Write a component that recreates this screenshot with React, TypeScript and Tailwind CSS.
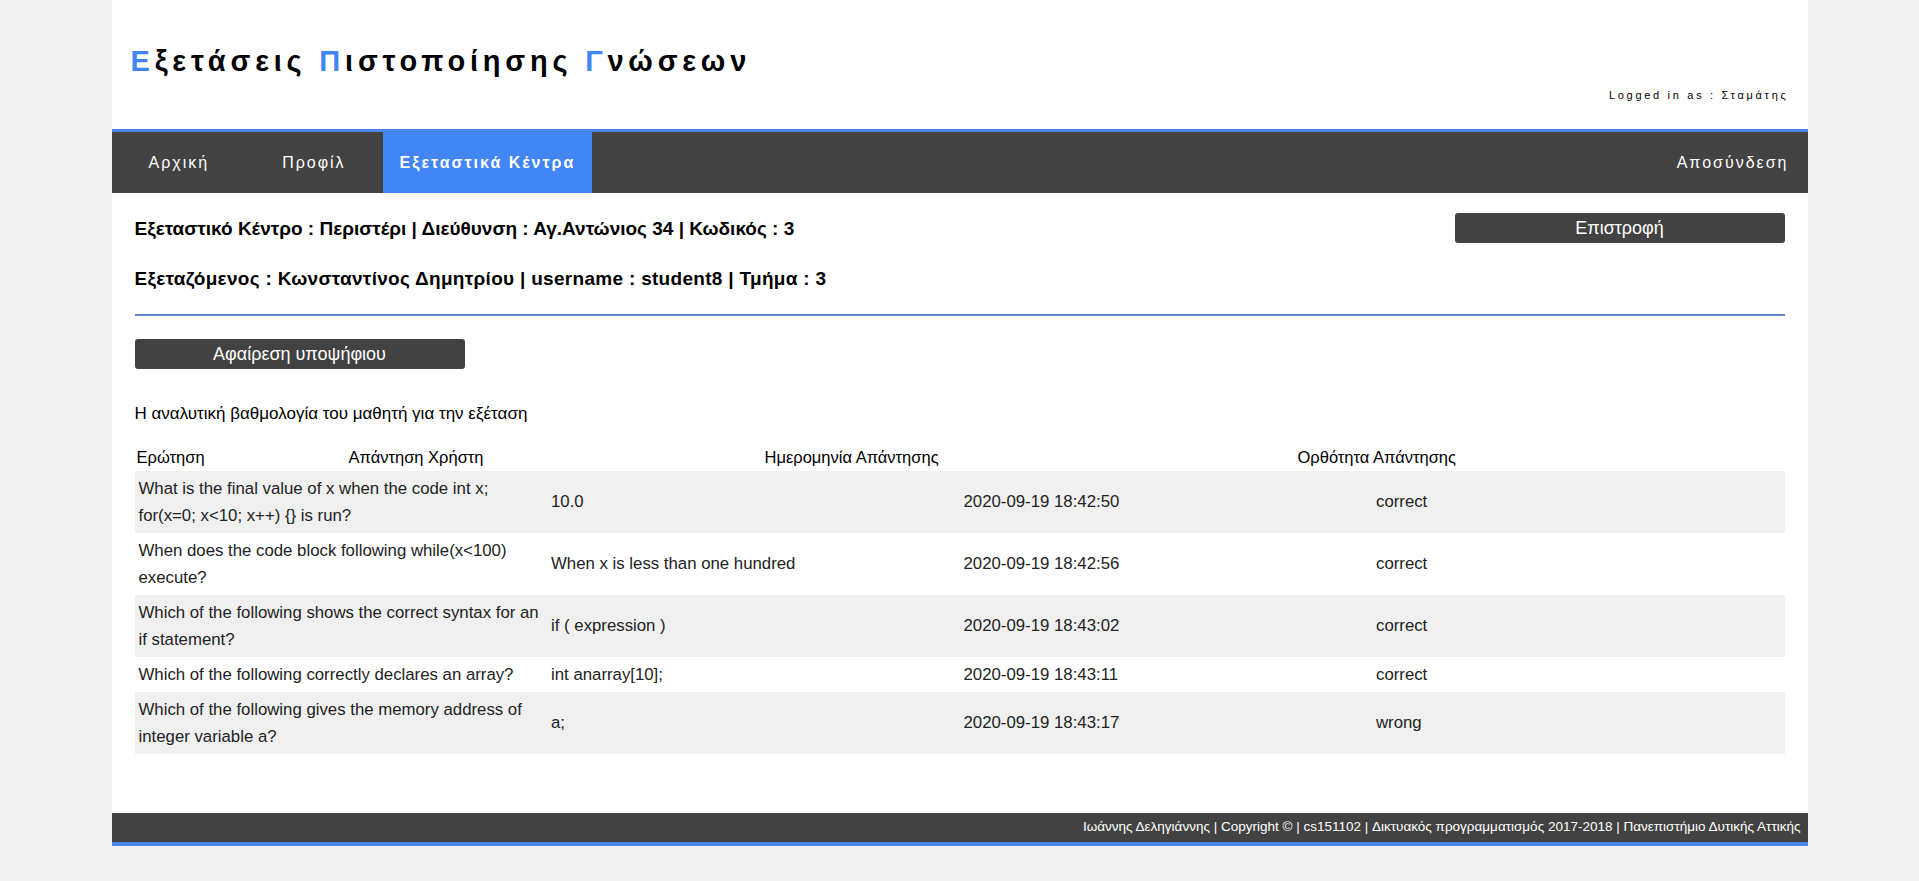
import React from "react";

const rows = [
	{
		q: "What is the final value of x when the code int x; for(x=0; x<10; x++) {} is run?",
		a: "10.0",
		d: "2020-09-19 18:42:50",
		r: "correct",
	},
	{
		q: "When does the code block following while(x<100) execute?",
		a: "When x is less than one hundred",
		d: "2020-09-19 18:42:56",
		r: "correct",
	},
	{
		q: "Which of the following shows the correct syntax for an if statement?",
		a: "if ( expression )",
		d: "2020-09-19 18:43:02",
		r: "correct",
	},
	{
		q: "Which of the following correctly declares an array?",
		a: "int anarray[10];",
		d: "2020-09-19 18:43:11",
		r: "correct",
	},
	{
		q: "Which of the following gives the memory address of integer variable a?",
		a: "a;",
		d: "2020-09-19 18:43:17",
		r: "wrong",
	},
];

const App = () => {
	return (
		<div className="min-h-screen bg-[#f0f0f0] font-['Liberation_Sans',Arial,sans-serif] text-[#111]">
			<div className="mx-auto w-[1696px] bg-white">
				{/* header */}
				<header className="h-[129px] flex items-start justify-between pl-[19px] pr-[19px]">
					<h1 className="pt-[40px] text-[29px] font-bold tracking-[4.8px] text-black">
						<span className="text-[#4285f4]">Ε</span>ξετάσεις{" "}
						<span className="text-[#4285f4]">Π</span>ιστοποίησης{" "}
						<span className="text-[#4285f4]">Γ</span>νώσεων
					</h1>
					<p className="pt-[87px] text-[11px] tracking-[2.7px] text-black">
						Logged in as : Σταμάτης
					</p>
				</header>

				{/* nav */}
				<nav className="flex h-[64px] items-stretch border-t-[3px] border-[#4a86e8] bg-[#424242] text-[16px] tracking-[2px] text-white">
					<a className="ml-[20px] flex items-center px-[17px]">Αρχική</a>
					<a className="ml-[39px] flex items-center px-[17px]">Προφίλ</a>
					<a className="ml-[20px] flex items-center bg-[#4285f4] px-[17px] font-bold">
						Εξεταστικά Κέντρα
					</a>
					<a className="ml-auto flex items-center pr-[19px]">Αποσύνδεση</a>
				</nav>

				{/* content */}
				<main className="px-[23px] pb-[59px]">
					<div className="flex items-start justify-between pt-[22px]">
						<div className="flex flex-col gap-[21px] text-[19px] font-bold text-black">
							<p>Εξεταστικό Κέντρο : Περιστέρι | Διεύθυνση : Αγ.Αντώνιος 34 | Κωδικός : 3</p>
							<p className="tracking-[0.3px]">
								Εξεταζόμενος : Κωνσταντίνος Δημητρίου | username : student8 | Τμήμα : 3
							</p>
						</div>
						<button className="mt-[-2px] h-[30px] w-[330px] rounded-[3px] bg-[#424242] text-[18px] text-white">
							Επιστροφή
						</button>
					</div>

					<hr className="mt-[21px] border-t-2 border-[#5b87c5]" />

					<button className="mt-[23px] h-[30px] w-[330px] rounded-[3px] bg-[#424242] text-[18px] text-white">
						Αφαίρεση υποψήφιου
					</button>

					<p className="mt-[32px] text-[17px] text-black">
						Η αναλυτική βαθμολογία του μαθητή για την εξέταση
					</p>

					<div className="mt-[16px] grid grid-cols-[212px_416px_533px_1fr] pl-[2px] text-[16.5px] leading-[28px] text-black">
						<span>Ερώτηση</span>
						<span>Απάντηση Χρήστη</span>
						<span>Ημερομηνία Απάντησης</span>
						<span>Ορθότητα Απάντησης</span>
					</div>

					<div className="text-[16.8px] leading-[27px] text-[#222]">
						{rows.map((row, i) => (
							<div
								key={i}
								className={`grid grid-cols-4 items-center py-[4px] ${
									i % 2 === 0 ? "bg-[#f0f0f0]" : "bg-white"
								}`}
							>
								<div className="px-[4px]">{row.q}</div>
								<div className="px-[4px]">{row.a}</div>
								<div className="px-[4px]">{row.d}</div>
								<div className="px-[4px]">{row.r}</div>
							</div>
						))}
					</div>
				</main>

				{/* footer */}
				<footer className="flex h-[33px] items-center justify-end border-b-4 border-[#4a86e8] bg-[#424242] pr-[7px] text-[13.5px] text-white">
					Ιωάννης Δεληγιάννης | Copyright © | cs151102 | Δικτυακός προγραμματισμός 2017-2018 |
					Πανεπιστήμιο Δυτικής Αττικής
				</footer>
			</div>
		</div>
	);
};

export default App;
